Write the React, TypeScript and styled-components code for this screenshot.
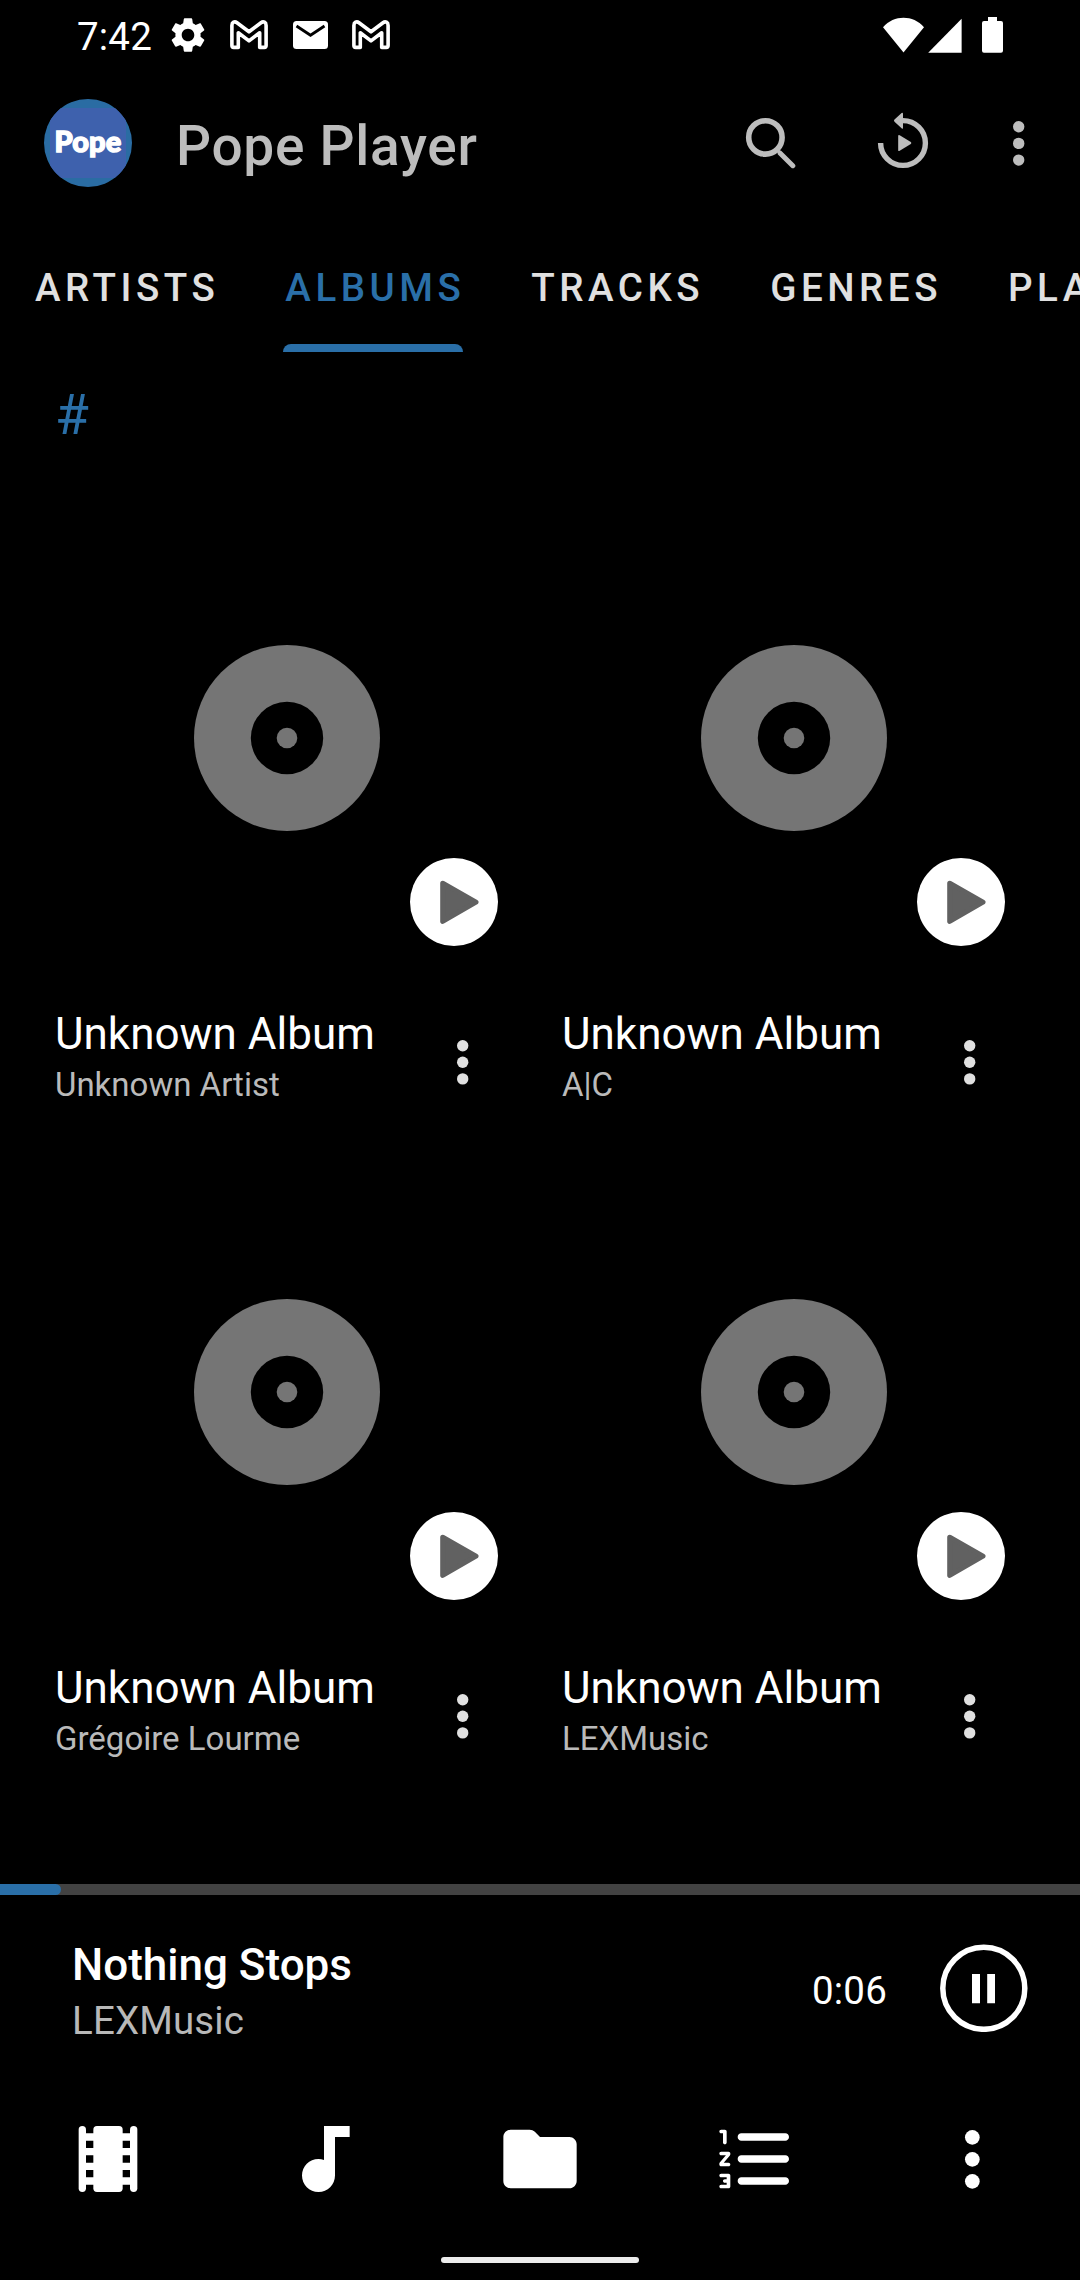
import React from "react";
import styled, { createGlobalStyle } from "styled-components";

const BLUE = "#2a6fa8";

const GlobalStyle = createGlobalStyle`
  * { box-sizing: border-box; }
  html, body { margin: 0; padding: 0; background: #000; }
  body { font-family: Roboto, "Liberation Sans", sans-serif; overflow: hidden; }
  svg { display: block; flex: none; }
`;

const Screen = styled.div`
  width: 1080px;
  height: 2280px;
  display: flex;
  flex-direction: column;
  background: #000;
  color: #fff;
  overflow: hidden;
`;

const StatusBar = styled.header`
  height: 72px;
  flex: none;
  display: flex;
  align-items: flex-start;
  padding: 0 76px 0 77px;
`;

const Clock = styled.span`
  width: 90px;
  padding-top: 14px;
  font-size: 38.5px;
  line-height: 46px;
  letter-spacing: 0.2px;
`;

const StatusIcons = styled.div<{ $gap?: number }>`
  display: flex;
  height: 70px;
  align-items: center;
  gap: ${(p) => p.$gap ?? 0}px;
`;

const GearSlot = styled.div`
  width: 38.5px;
`;

const Spacer = styled.div`
  flex: 1;
`;

const Toolbar = styled.div`
  height: 142px;
  flex: none;
  display: flex;
  align-items: center;
  padding: 0 12px 0 44px;
`;

const Logo = styled.div`
  width: 88px;
  height: 88px;
  border-radius: 50%;
  overflow: hidden;
  display: flex;
  align-items: center;
  justify-content: center;
  background: #2a6ca3;
`;

const LogoPlate = styled.div`
  width: 76px;
  height: 70px;
  border-radius: 10px;
  display: flex;
  align-items: center;
  justify-content: center;
  background: #3e61ad;
`;

const LogoText = styled.span`
  font-family: Lato, sans-serif;
  font-weight: 900;
  font-size: 29px;
  line-height: 30px;
  letter-spacing: 0.2px;
  padding-bottom: 4px;
  -webkit-text-stroke: 1.4px #fff;
`;

const AppTitle = styled.h1`
  margin: 0 0 0 44px;
  padding-top: 6px;
  font-size: 55px;
  line-height: 64px;
  font-weight: 500;
  letter-spacing: 0.7px;
  color: #bdbdbd;
`;

const ToolbarActions = styled.div`
  display: flex;
  align-items: center;
  color: #bdbdbd;
`;

const Action = styled.button<{ $width: number }>`
  width: ${(p) => p.$width}px;
  height: 132px;
  padding: 0;
  border: 0;
  background: none;
  color: inherit;
  display: flex;
  align-items: center;
  justify-content: center;
`;

const Tabs = styled.nav`
  height: 138px;
  flex: none;
  display: flex;
`;

const Tab = styled.div<{ $active?: boolean }>`
  flex: none;
  display: flex;
  flex-direction: column;
  margin: 0 33px;
  color: ${(p) => (p.$active ? BLUE : "#e0e0e0")};
`;

const TabLabel = styled.span`
  padding: 51px 0 0 2px;
  margin-right: -2px;
  height: 130px;
  font-size: 38.5px;
  line-height: 46px;
  font-weight: 500;
  letter-spacing: 4.53px;
`;

const TabIndicator = styled.div`
  height: 8px;
  border-radius: 8px 8px 0 0;
  background: ${BLUE};
`;

const SectionHeader = styled.h2`
  height: 154px;
  flex: none;
  margin: 0;
  padding: 31px 55px 0;
  font-size: 55px;
  line-height: 64px;
  font-weight: 400;
  color: ${BLUE};
`;

const Albums = styled.main`
  flex: 1;
  display: grid;
  grid-template-columns: 470px 470px;
  grid-auto-rows: 654px;
  column-gap: 37px;
  align-content: start;
  padding-left: 52px;
  overflow: hidden;
`;

const Cover = styled.div`
  position: relative;
  height: 464px;
  border-radius: 22px;
  display: flex;
  align-items: center;
  justify-content: center;
`;

const PlayButton = styled.button`
  position: absolute;
  right: 24px;
  bottom: 24px;
  width: 88px;
  height: 88px;
  padding: 0;
  border: 0;
  border-radius: 50%;
  background: #fff;
`;

const Caption = styled.div`
  display: flex;
  align-items: flex-start;
  padding: 38px 48px 0 3px;
`;

const CaptionText = styled.div`
  flex: 1;
  display: flex;
  flex-direction: column;
  gap: 5px;
`;

const AlbumTitle = styled.span`
  font-size: 44px;
  line-height: 52px;
`;

const AlbumArtist = styled.span`
  font-size: 33px;
  line-height: 39px;
  color: #bababa;
`;

const MoreButton = styled.button`
  width: 22px;
  margin-top: 31px;
  padding: 0;
  border: 0;
  background: none;
  color: #e0e0e0;
  display: flex;
  justify-content: center;
`;

const Player = styled.section`
  flex: none;
  height: 191px;
`;

const ProgressTrack = styled.div`
  height: 11px;
  background: #424242;
`;

const ProgressFill = styled.div`
  height: 11px;
  border-radius: 0 5.5px 5.5px 0;
  background: ${BLUE};
`;

const PlayerRow = styled.div`
  height: 180px;
  display: flex;
  padding: 0 52px 0 72px;
`;

const NowPlaying = styled.div`
  flex: 1;
  padding-top: 44px;
  display: flex;
  flex-direction: column;
  gap: 7px;
`;

const TrackTitle = styled.span`
  font-size: 44px;
  line-height: 52px;
  font-weight: 500;
`;

const TrackArtist = styled.span`
  font-size: 38.5px;
  line-height: 46px;
  letter-spacing: 0.15px;
  color: #b8b8b8;
`;

const Elapsed = styled.span`
  padding: 73px 53px 0 0;
  font-size: 38.5px;
  line-height: 46px;
  letter-spacing: 0.2px;
`;

const PauseButton = styled.button`
  width: 88px;
  height: 88px;
  margin-top: 49px;
  padding: 0;
  border: 0;
  background: none;
`;

const BottomNav = styled.nav`
  height: 168px;
  flex: none;
  display: grid;
  grid-template-columns: repeat(5, 216px);
`;

const NavItem = styled.div`
  display: flex;
  align-items: center;
  justify-content: center;
`;

const GestureBar = styled.div`
  flex: none;
  height: 37px;
  display: flex;
  justify-content: center;
  padding-top: 14px;

  &::after {
    content: "";
    width: 198px;
    height: 6px;
    border-radius: 3px;
    background: #ececec;
  }
`;

const Dots = ({ radius, step, color = "currentColor" }: { radius: number; step: number; color?: string }) => {
  const w = radius * 2;
  const h = step * 2 + w;
  return (
    <svg width={w + 2} height={h + 2} viewBox={`-1 -1 ${w + 2} ${h + 2}`} fill={color}>
      {[0, 1, 2].map((i) => (
        <circle key={i} cx={radius} cy={radius + i * step} r={radius} />
      ))}
    </svg>
  );
};

const MailboxM = () => (
  <svg width="38" height="30" viewBox="0 0 38 30" fill="none" stroke="#fff" strokeWidth="3.6" strokeLinejoin="round">
    <path d="M1.9 25.6V5.4C1.9 2.2 4.6 1 7 2.7L19 11.8L31 2.7C33.4 1 36.1 2.2 36.1 5.4V25.6Q36.1 27.4 34.3 27.4H29.7V12.8L19 20.9L8.3 12.8V27.4H3.7Q1.9 27.4 1.9 25.6Z" />
  </svg>
);

const Gear = () => (
  <svg width="42" height="42" viewBox="0 0 24 24" fill="#fff">
    <path d="M19.14 12.94c.04-.3.06-.61.06-.94s-.02-.64-.07-.94l2.03-1.58c.18-.14.23-.41.12-.61l-1.92-3.32c-.12-.22-.37-.29-.59-.22l-2.39.96c-.5-.38-1.03-.7-1.62-.94L14.4 2.81c-.04-.24-.24-.41-.48-.41h-3.84c-.24 0-.43.17-.47.41l-.36 2.54c-.59.24-1.13.57-1.62.94l-2.39-.96c-.22-.08-.47 0-.59.22L2.74 8.87c-.12.21-.08.47.12.61l2.03 1.58c-.05.3-.09.63-.09.94s.02.64.07.94l-2.03 1.58c-.18.14-.23.41-.12.61l1.92 3.32c.12.22.37.29.59.22l2.39-.96c.5.38 1.03.7 1.62.94l.36 2.54c.05.24.24.41.48.41h3.84c.24 0 .44-.17.47-.41l.36-2.54c.59-.24 1.13-.56 1.62-.94l2.39.96c.22.08.47 0 .59-.22l1.92-3.32c.12-.22.07-.47-.12-.61l-2.01-1.58zM12 15.6c-1.98 0-3.6-1.62-3.6-3.6s1.62-3.6 3.6-3.6 3.6 1.62 3.6 3.6-1.62 3.6-3.6 3.6z" />
  </svg>
);

const Envelope = () => (
  <svg width="35" height="28" viewBox="0 0 35 28">
    <rect width="35" height="28" rx="3.5" fill="#fff" />
    <path d="M3.5 5L17.5 14.2L31.5 5" fill="none" stroke="#000" strokeWidth="2.8" />
  </svg>
);

const Signals = () => (
  <svg width="121" height="36" viewBox="0 0 121 36" fill="#fff">
    <path d="M0 10.2C11 -2.3 30 -2.3 41 10.2L20.5 35.5Z" />
    <path d="M45.2 35.7L78.6 1.8V35.7Z" />
    <path d="M105 0H114V4H118Q120 4 120 6V33.7Q120 35.7 118 35.7H101Q99 35.7 99 33.7V6Q99 4 101 4H105Z" />
  </svg>
);

const Search = () => (
  <svg width="52" height="52" viewBox="0 0 52 52" fill="none" stroke="currentColor">
    <circle cx="20.4" cy="20.4" r="16.7" strokeWidth="5.6" />
    <path d="M35.2 36.2L47.8 48.7" strokeWidth="5" strokeLinecap="round" />
    <path d="M32.5 33.4L36.6 37.4" strokeWidth="3.4" />
  </svg>
);

const Replay = () => (
  <svg width="52" height="62" viewBox="0 0 52 62">
    <path d="M3.6 31A22.4 22.4 0 1 0 26 8.6" fill="none" stroke="currentColor" strokeWidth="5.4" />
    <path d="M24.6 1.1Q26 .2 26 2V15.6Q26 17.6 24.6 16.3L17.5 9.8Q16.4 8.7 17.5 7.6Z" fill="currentColor" />
    <path d="M21.2 24.1Q21.2 22.3 22.7 23.2L33.8 30.1Q35 31 33.8 31.9L22.7 38.8Q21.2 39.7 21.2 37.9Z" fill="currentColor" />
  </svg>
);

const Disc = () => (
  <svg width="186" height="186" viewBox="0 0 186 186">
    <circle cx="93" cy="93" r="93" fill="#757575" />
    <circle cx="93" cy="93" r="36.2" fill="#000" />
    <circle cx="93" cy="93" r="10.3" fill="#757575" />
  </svg>
);

const PlayGlyph = () => (
  <svg width="88" height="88" viewBox="0 0 88 88">
    <path d="M32.7 25.2L66 44.2L32.7 63.4Z" fill="#616161" stroke="#616161" strokeWidth="5" strokeLinejoin="round" />
  </svg>
);

const PauseGlyph = () => (
  <svg width="88" height="88" viewBox="0 0 88 88">
    <circle cx="43.8" cy="44.3" r="41" fill="none" stroke="#fff" strokeWidth="5.5" />
    <path d="M32 30H40V59.3H32ZM47.2 30H55V59.3H47.2Z" fill="#fff" />
  </svg>
);

const NavIcon = ({ d }: { d: string }) => (
  <svg width="88" height="88" viewBox="0 0 24 24" fill="#fff">
    <path d={d} />
  </svg>
);

const FilmIcon = () => (
  <svg width="88" height="88" viewBox="0 0 24 24" fill="#fff">
    <rect x="4" y="3" width="2" height="18" rx="1" />
    <rect x="18" y="3" width="2" height="18" rx="1" />
    <rect x="8" y="3" width="8" height="18" rx="1" />
    {[5, 9, 13, 17].map((y) => (
      <path key={y} d={`M5 ${y}h4v2H5zM15 ${y}h4v2h-4z`} />
    ))}
  </svg>
);

const NOTE = "M12 3V12.26C11.5 12.09 11 12 10.5 12C8 12 6 14 6 16.5S8 21 10.5 21 15 19 15 16.5V6H19V3H12Z";
const FOLDER =
  "M10.59 4.59C10.21 4.21 9.7 4 9.17 4H4c-1.1 0-1.99.9-1.99 2L2 18c0 1.1.9 2 2 2h16c1.1 0 2-.9 2-2V8c0-1.1-.9-2-2-2h-8l-1.41-1.41z";
const NUMBERED =
  "M8 7h12c.55 0 1-.45 1-1s-.45-1-1-1H8c-.55 0-1 .45-1 1s.45 1 1 1zm12 10H8c-.55 0-1 .45-1 1s.45 1 1 1h12c.55 0 1-.45 1-1s-.45-1-1-1zm0-6H8c-.55 0-1 .45-1 1s.45 1 1 1h12c.55 0 1-.45 1-1s-.45-1-1-1zM4.5 16h-2c-.28 0-.5.22-.5.5s.22.5.5.5H4v.5h-.5c-.28 0-.5.22-.5.5s.22.5.5.5H4v.5H2.5c-.28 0-.5.22-.5.5s.22.5.5.5h2c.28 0 .5-.22.5-.5v-3c0-.28-.22-.5-.5-.5zm-2-11H3v2.5c0 .28.22.5.5.5s.5-.22.5-.5v-3c0-.28-.22-.5-.5-.5h-1c-.28 0-.5.22-.5.5s.22.5.5.5zm2 5h-2c-.28 0-.5.22-.5.5s.22.5.5.5h1.3l-1.68 1.96c-.08.09-.12.21-.12.32v.22c0 .28.22.5.5.5h2c.28 0 .5-.22.5-.5s-.22-.5-.5-.5H3.2l1.68-1.96c.08-.09.12-.21.12-.32v-.22c0-.28-.22-.5-.5-.5z";

const TABS = ["ARTISTS", "ALBUMS", "TRACKS", "GENRES", "PLAYLISTS"];
const ARTISTS = ["Unknown Artist", "A|C", "Grégoire Lourme", "LEXMusic"];

const Album = ({ artist }: { artist: string }) => (
  <article>
    <Cover>
      <Disc />
      <PlayButton aria-label="Play">
        <PlayGlyph />
      </PlayButton>
    </Cover>
    <Caption>
      <CaptionText>
        <AlbumTitle>Unknown Album</AlbumTitle>
        <AlbumArtist>{artist}</AlbumArtist>
      </CaptionText>
      <MoreButton aria-label="More">
        <Dots radius={5.7} step={16.6} />
      </MoreButton>
    </Caption>
  </article>
);

export default function App() {
  const progress = 61 / 1080;
  return (
    <>
      <GlobalStyle />
      <Screen>
        <StatusBar>
          <Clock>7:42</Clock>
          <StatusIcons $gap={24.5}>
            <GearSlot>
              <Gear />
            </GearSlot>
            <MailboxM />
            <Envelope />
            <MailboxM />
          </StatusIcons>
          <Spacer />
          <StatusIcons>
            <Signals />
          </StatusIcons>
        </StatusBar>

        <Toolbar>
          <Logo>
            <LogoPlate>
              <LogoText>Pope</LogoText>
            </LogoPlate>
          </Logo>
          <AppTitle>Pope Player</AppTitle>
          <Spacer />
          <ToolbarActions>
            <Action $width={132} aria-label="Search">
              <Search />
            </Action>
            <Action $width={132} aria-label="Resume playback">
              <Replay />
            </Action>
            <Action $width={99} aria-label="More">
              <Dots radius={5.7} step={16.7} />
            </Action>
          </ToolbarActions>
        </Toolbar>

        <Tabs>
          {TABS.map((name) => (
            <Tab key={name} $active={name === "ALBUMS"}>
              <TabLabel>{name}</TabLabel>
              {name === "ALBUMS" && <TabIndicator />}
            </Tab>
          ))}
        </Tabs>

        <SectionHeader>#</SectionHeader>

        <Albums>
          {ARTISTS.map((artist) => (
            <Album key={artist} artist={artist} />
          ))}
        </Albums>

        <Player>
          <ProgressTrack>
            <ProgressFill style={{ width: `${progress * 100}%` }} />
          </ProgressTrack>
          <PlayerRow>
            <NowPlaying>
              <TrackTitle>Nothing Stops</TrackTitle>
              <TrackArtist>LEXMusic</TrackArtist>
            </NowPlaying>
            <Elapsed>0:06</Elapsed>
            <PauseButton aria-label="Pause">
              <PauseGlyph />
            </PauseButton>
          </PlayerRow>
        </Player>

        <BottomNav>
          <NavItem>
            <FilmIcon />
          </NavItem>
          <NavItem>
            <NavIcon d={NOTE} />
          </NavItem>
          <NavItem>
            <NavIcon d={FOLDER} />
          </NavItem>
          <NavItem>
            <NavIcon d={NUMBERED} />
          </NavItem>
          <NavItem>
            <Dots radius={7.35} step={22} />
          </NavItem>
        </BottomNav>
        <GestureBar />
      </Screen>
    </>
  );
}
